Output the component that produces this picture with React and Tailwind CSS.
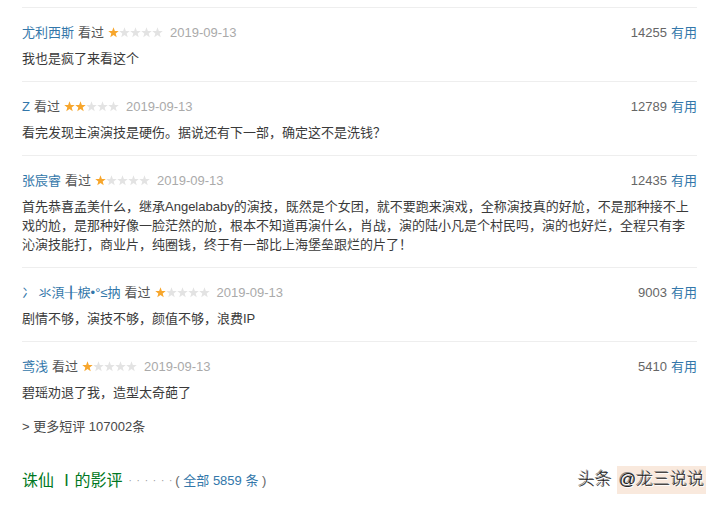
import React from "react";

const STAR = "5.5,0.3 6.85,3.94 10.73,4.1 7.69,6.51 8.73,10.25 5.5,8.1 2.27,10.25 3.31,6.51 0.27,4.1 4.15,3.94";

function Stars({ n }) {
  return (
    <svg width="55" height="11" viewBox="0 0 55 11" className="block">
      {[0, 1, 2, 3, 4].map((i) => (
        <polygon
          key={i}
          points={STAR}
          transform={`translate(${i * 11} 0)`}
          fill={i < n ? "#f7a62c" : "#e3e3e3"}
        />
      ))}
    </svg>
  );
}

function Item({ name, stars, votes, children }) {
  return (
    <div className="border-t border-[#eeeeee] pt-[15px] pb-[13px]">
      <div className="flex h-[19px] items-center justify-between leading-[19px]">
        <div className="flex items-center">
          <span className="text-[#3377aa] mr-[4px]">{name}</span>
          <span className="text-[#555555] mr-[4px]">看过</span>
          <span className="mr-[7px]">
            <Stars n={stars} />
          </span>
          <span className="text-[#aaaaaa]">2019-09-13</span>
        </div>
        <div>
          <span className="text-[#666666]">{votes}</span>
          <span className="text-[#3377aa] ml-[4px]">有用</span>
        </div>
      </div>
      <p className="mt-[7px] leading-[19px] text-[#3a3a3a]">{children}</p>
    </div>
  );
}

export default function App() {
  return (
    <div
      className="relative h-[505px] w-[725px] overflow-hidden bg-white text-[13px]"
      style={{ fontFamily: '"Liberation Sans", "Noto Sans CJK SC", sans-serif' }}
    >
      <div className="ml-[22px] w-[675px] pt-[7px]">
        <Item name="尤利西斯" stars={1} votes="14255">我也是疯了来看这个</Item>
        <Item name="Z" stars={2} votes="12789">看完发现主演演技是硬伤。据说还有下一部，确定这不是洗钱？</Item>
        <Item name="张宸睿" stars={1} votes="12435">
          首先恭喜孟美什么，继承Angelababy的演技，既然是个女团，就不要跑来演戏，全称演技真的好尬，不是那种接不上
          <br />
          戏的尬，是那种好像一脸茫然的尬，根本不知道再演什么，肖战，演的陆小凡是个村民吗，演的也好烂，全程只有李
          <br />
          沁演技能打，商业片，纯圈钱，终于有一部比上海堡垒跟烂的片了！
        </Item>
        <Item name="冫 氺湏╂棙•°≤抐" stars={1} votes="9003">剧情不够，演技不够，颜值不够，浪费IP</Item>
        <Item name="鸢浅" stars={1} votes="5410">碧瑶劝退了我，造型太奇葩了</Item>
        <div className="mt-[2px] leading-[19px] text-[#494949]">&gt; 更多短评 107002条</div>
        <div className="mt-[33px] flex items-center leading-[24px]">
          <span className="text-[16px] text-[#007722]">诛仙 Ⅰ的影评</span>
          <span className="ml-[6px] text-[10px] tracking-[1px] text-[#999999]">· · · · · ·</span>
          <span className="ml-[2px] text-[#666666]">
            (&nbsp;<span className="text-[#3377aa]">全部 5859 条</span>&nbsp;)
          </span>
        </div>
      </div>
      <div className="absolute left-[578px] top-[466px] flex items-center text-[17px] font-light leading-[28px] text-[#222222] [text-shadow:1px_1px_0_#ffffff,-1px_-1px_0_#8a8a8a]">
        <span>头条</span>
        <span className="ml-[5px] bg-[#f9e9dd] px-[2px]">@龙三说说</span>
      </div>
    </div>
  );
}
